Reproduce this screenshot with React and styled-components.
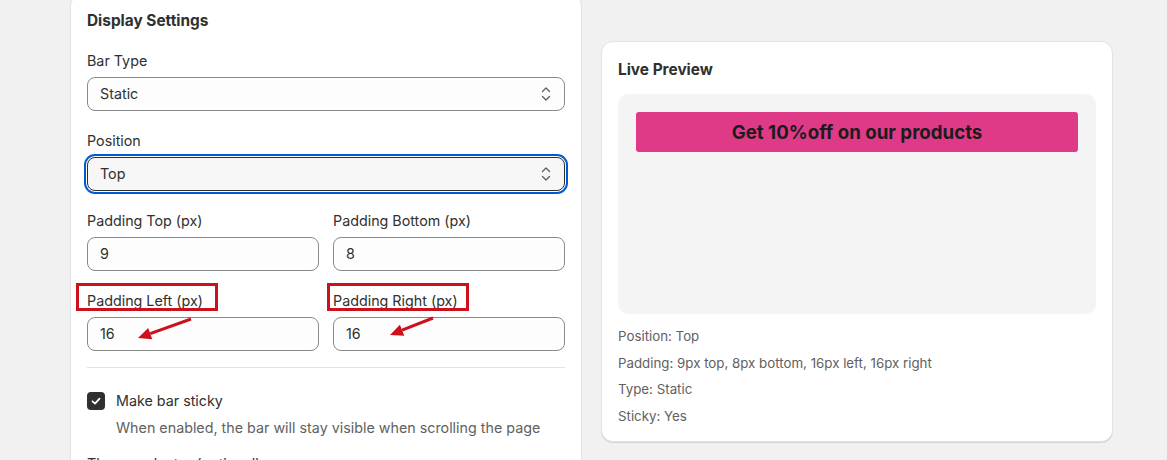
import React from 'react'
import styled, { createGlobalStyle } from 'styled-components'

const GlobalStyle = createGlobalStyle`
  html, body {
    margin: 0;
    padding: 0;
    background: #f1f1f1;
    font-family: Inter, "Noto Sans", "Liberation Sans", sans-serif;
    color: #303030;
    font-size: 14.3px;
    line-height: 20px;
  }
`

const Page = styled.div`
  display: flex;
  align-items: flex-start;
  gap: 19px;
  padding-left: 70px;
  height: 460px;
  overflow: hidden;
`

const Card = styled.section`
  box-sizing: border-box;
  width: 512px;
  background: #fff;
  border: 1px solid #e3e3e3;
  border-radius: 12px;
  box-shadow: 0 1px 0 rgba(0, 0, 0, 0.12);
  padding: 16px;
  margin-top: ${p => p.offset}px;
`

const Heading = styled.h2`
  margin: 0;
  font-size: 15.4px;
  line-height: 20px;
  font-weight: 650;
  color: #303030;
`

const Stack = styled.div`
  display: flex;
  flex-direction: column;
  gap: 20px;
  margin-top: 20px;
`

const Row = styled.div`
  display: grid;
  grid-template-columns: 1fr 1fr;
  gap: 14px;
`

const Field = styled.div`
  position: relative;
  display: flex;
  flex-direction: column;
`

const Label = styled.label`
  line-height: 20px;
  margin-bottom: 6px;
  color: #303030;
`

const Control = styled.div`
  box-sizing: border-box;
  height: 34px;
  display: flex;
  align-items: center;
  justify-content: space-between;
  padding: 0 12px;
  border: 1px solid ${p => (p.focused ? '#303030' : '#8a8a8a')};
  border-radius: 8px;
  background: ${p => (p.focused ? '#f7f7f7' : '#fdfdfd')};
  box-shadow: ${p => (p.focused ? '0 0 0 1px #fff, 0 0 0 3px #005bd3' : 'none')};
  color: #303030;
`

const Divider = styled.hr`
  border: 0;
  border-top: 1px solid #e3e3e3;
  margin: 16px 0 0;
`

const CheckRow = styled.div`
  display: grid;
  grid-template-columns: 18px 1fr;
  column-gap: 11px;
  margin-top: 23px;
`

const Box = styled.span`
  width: 18px;
  height: 18px;
  margin-top: 1px;
  border-radius: 4px;
  background: #303030;
  display: flex;
  align-items: center;
  justify-content: center;
`

const Help = styled.div`
  grid-column: 2;
  margin-top: 7px;
  color: #616161;
`

const CutLabel = styled.div`
  margin-top: 16px;
`

const PreviewCard = styled(Card)`
  padding-top: 18px;
  padding-bottom: 15px;
`

const Stage = styled.div`
  margin-top: 14px;
  height: 220px;
  box-sizing: border-box;
  padding: 18px;
  background: #f4f4f4;
  border-radius: 10px;
`

const Bar = styled.div`
  background: #df3a87;
  border-radius: 3px;
  text-align: center;
  font-size: 18.7px;
  line-height: 23px;
  font-weight: 700;
  color: #1c1c1c;
`

const Info = styled.div`
  display: flex;
  flex-direction: column;
  gap: 6.5px;
  margin-top: 12px;
  font-size: 13.3px;
  color: #616161;
`

const Mark = styled.div`
  position: absolute;
  top: -8px;
  width: 142px;
  height: 28px;
  box-sizing: border-box;
  border: 3px solid #cc101c;
  pointer-events: none;
`

const ArrowLayer = styled.svg`
  position: absolute;
  top: 0;
  left: 0;
  overflow: visible;
  pointer-events: none;
`

const Chevrons = () => (
  <svg width="12" height="16" viewBox="0 0 12 16" fill="none" stroke="#5c5c5c" strokeWidth="1.25" strokeLinecap="round" strokeLinejoin="round">
    <polyline points="2.5,5.5 6,2 9.5,5.5" />
    <polyline points="2.5,10.5 6,14 9.5,10.5" />
  </svg>
)

const Arrow = ({ from, to }) => {
  const dx = to[0] - from[0]
  const dy = to[1] - from[1]
  const len = Math.hypot(dx, dy)
  const ux = dx / len
  const uy = dy / len
  const bx = to[0] - ux * 13
  const by = to[1] - uy * 13
  const px = -uy * 6
  const py = ux * 6
  return (
    <ArrowLayer width="1" height="1">
      <line x1={from[0]} y1={from[1]} x2={bx} y2={by} stroke="#cc101c" strokeWidth="3" />
      <polygon points={`${to[0]},${to[1]} ${bx + px},${by + py} ${bx - px},${by - py}`} fill="#cc101c" />
    </ArrowLayer>
  )
}

const Select = ({ label, value, focused }) => (
  <Field>
    <Label>{label}</Label>
    <Control focused={focused}>
      <span>{value}</span>
      <Chevrons />
    </Control>
  </Field>
)

const Input = ({ label, value, mark, arrow }) => (
  <Field>
    <Label>{label}</Label>
    <Control>{value}</Control>
    {mark !== undefined && <Mark style={{ left: mark }} />}
    {arrow && <Arrow from={arrow[0]} to={arrow[1]} />}
  </Field>
)

export default function App() {
  return (
    <>
      <GlobalStyle />
      <Page>
        <Card offset={-6}>
          <Heading>Display Settings</Heading>
          <Stack>
            <Select label="Bar Type" value="Static" />
            <Select label="Position" value="Top" focused />
            <Row>
              <Input label="Padding Top (px)" value="9" />
              <Input label="Padding Bottom (px)" value="8" />
            </Row>
            <Row>
              <Input label="Padding Left (px)" value="16" mark={-11} arrow={[[104, 28], [51, 47]]} />
              <Input label="Padding Right (px)" value="16" mark={-6} arrow={[[100, 27], [57, 44]]} />
            </Row>
          </Stack>
          <Divider />
          <CheckRow>
            <Box>
              <svg width="12" height="12" viewBox="0 0 12 12" fill="none" stroke="#fff" strokeWidth="1.8" strokeLinecap="round" strokeLinejoin="round">
                <polyline points="2.5,6.3 5,8.6 9.5,3.6" />
              </svg>
            </Box>
            <span>Make bar sticky</span>
            <Help>When enabled, the bar will stay visible when scrolling the page</Help>
          </CheckRow>
          <CutLabel>Theme selector (optional)</CutLabel>
        </Card>

        <PreviewCard offset={41}>
          <Heading>Live Preview</Heading>
          <Stage>
            <Bar style={{ padding: '9px 16px 8px' }}>Get 10%off on our products</Bar>
          </Stage>
          <Info>
            <span>Position: Top</span>
            <span>Padding: 9px top, 8px bottom, 16px left, 16px right</span>
            <span>Type: Static</span>
            <span>Sticky: Yes</span>
          </Info>
        </PreviewCard>
      </Page>
    </>
  )
}
